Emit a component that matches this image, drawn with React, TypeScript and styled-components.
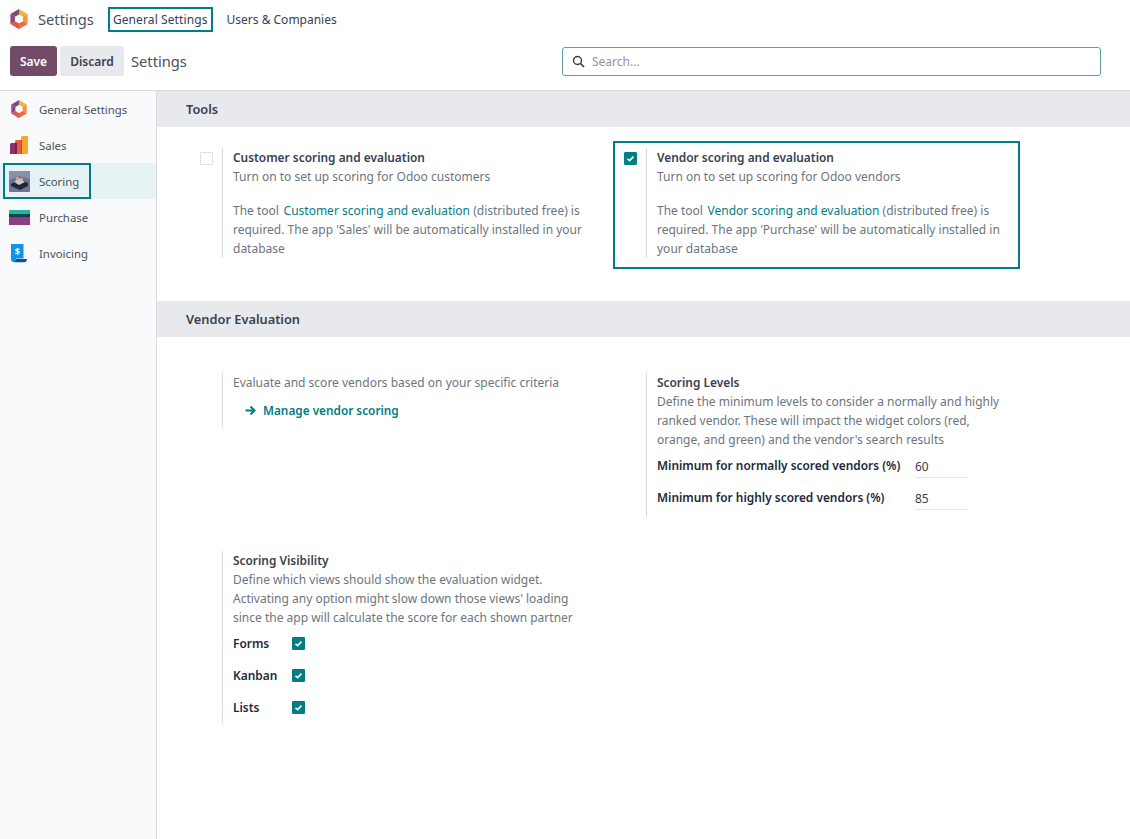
import styled, { createGlobalStyle } from 'styled-components';

const GlobalStyle = createGlobalStyle`
  html, body {
    margin: 0;
    padding: 0;
    background: #fff;
    font-family: "Noto Sans", "Open Sans", sans-serif;
    font-size: 12px;
    color: #6c757d;
  }
`;

const TEAL = '#017e84';

function OdooLogo({ size = 20 }: { size?: number }) {
  return (
    <svg width={size} height={size} viewBox="0 0 20 20">
      <path d="M10 0 L18.6 5 L14 7.7 L10 5.4 Z" fill="#f7b13c" />
      <path d="M18.6 5 V15 L14 12.3 V7.7 Z" fill="#f5963a" />
      <path d="M18.6 15 L10 20 L5.6 17.5 L10 14.6 L14 12.3 Z" fill="#ef6a3c" />
      <path d="M10 20 L1.4 15 L6 12.3 L10 14.6 Z" fill="#e4573f" />
      <path d="M1.4 15 V5 L6 7.7 V12.3 Z" fill="#8f4a7c" />
      <path d="M1.4 5 L10 0 V5.4 L6 7.7 Z" fill="#7c4a80" />
    </svg>
  );
}

function SalesIcon() {
  return (
    <svg width="20" height="20" viewBox="0 0 20 20">
      <path d="M1 9.5Q1 8 2.5 8H8V19H1Z" fill="#8f2f6b" />
      <path d="M6 6.5Q6 5 7.5 5H13V19H6Z" fill="#e8593f" />
      <path d="M12 2.5Q12 1 13.5 1H19V18Q19 19 18 19H12Z" fill="#f7a72b" />
      <rect x="6" y="8" width="2" height="11" fill="#6e2450" />
      <rect x="12" y="5" width="1" height="14" fill="#c6452f" />
    </svg>
  );
}

function ScoringIcon() {
  return (
    <svg width="21" height="21" viewBox="0 0 21 21">
      <rect width="21" height="21" rx="1" fill="#6f7396" />
      <path d="M0 0H21V8L10 5L0 9Z" fill="#8c8fac" />
      <path d="M2 13L10 8L19 12V15L11 19L2 15Z" fill="#23263a" />
      <path d="M5 11L10 7L16 11L10 14Z" fill="#c9c6cf" />
      <circle cx="8.5" cy="7.5" r="1.8" fill="#e59a72" />
      <circle cx="12.5" cy="8.5" r="1.4" fill="#eab193" />
    </svg>
  );
}

function PurchaseIcon() {
  return (
    <svg width="21" height="15" viewBox="0 0 21 15">
      <rect width="21" height="4" fill="#20b8a0" />
      <rect y="4" width="21" height="3" fill="#14404c" />
      <rect y="7" width="21" height="8" fill="#8a3f7e" />
    </svg>
  );
}

function InvoicingIcon() {
  return (
    <svg width="20" height="20" viewBox="0 0 20 20">
      <path d="M2 1H14.5V15.5H7V19H4.5C3 19 2 18 2 16.5Z" fill="#1193e8" />
      <path d="M4.5 19.2C6.5 19.2 7 17.5 7 16H18C18 18 17 19.2 15 19.2Z" fill="#0b4f9e" />
      <text x="8.3" y="11.5" fontSize="9" fontWeight="700" fill="#fff" textAnchor="middle" fontFamily="Noto Sans, sans-serif">$</text>
    </svg>
  );
}

const Page = styled.div`
  width: 1130px;
  height: 839px;
  display: flex;
  flex-direction: column;
  overflow: hidden;
`;

const NavBar = styled.div`
  height: 38px;
  display: flex;
  align-items: center;
  padding-left: 9px;
`;

const AppName = styled.span`
  margin-left: 9px;
  font-size: 14.7px;
  color: #4a4f59;
`;

const NavItem = styled.span<{ $outlined?: boolean }>`
  font-size: 12px;
  color: #374151;
  box-sizing: border-box;
  height: 25px;
  display: flex;
  align-items: center;
  padding: 0 ${({ $outlined }) => ($outlined ? '3px' : '4px')};
  margin-left: ${({ $outlined }) => ($outlined ? '14px' : '8px')};
  letter-spacing: ${({ $outlined }) => ($outlined ? '0.1px' : '0')};
  border: 2px solid ${({ $outlined }) => ($outlined ? TEAL : 'transparent')};
`;

const ControlBar = styled.div`
  height: 53px;
  display: flex;
  align-items: center;
  padding: 0 29px 6px 10px;
  border-bottom: 1px solid #d8dadd;
  box-sizing: border-box;
`;

const ActionButton = styled.button<{ $primary?: boolean }>`
  height: 30px;
  border: 0;
  border-radius: 3px;
  font: 600 12px "Noto Sans", sans-serif;
  padding: 0;
  margin-right: 3px;
  width: ${({ $primary }) => ($primary ? '47px' : '64px')};
  background: ${({ $primary }) => ($primary ? '#714b67' : '#e7e9ed')};
  color: ${({ $primary }) => ($primary ? '#fff' : '#374151')};
`;

const Breadcrumb = styled.span`
  margin-left: 4px;
  font-size: 14.7px;
  color: #4a4f59;
`;

const SearchBox = styled.div`
  margin-left: auto;
  width: 539px;
  height: 29px;
  box-sizing: border-box;
  border: 1px solid #5f9ea3;
  border-radius: 3px;
  display: flex;
  align-items: center;
  padding-left: 9px;
  gap: 7px;
  color: #8f959e;
`;

const Body = styled.div`
  flex: 1;
  display: flex;
  min-height: 0;
`;

const Sidebar = styled.div`
  width: 156px;
  border-right: 1px solid #d8dadd;
  background: #f9fafb;
`;

const SideItem = styled.div<{ $active?: boolean }>`
  position: relative;
  height: 36px;
  display: flex;
  align-items: center;
  color: #4a4f59;
  font-size: 11.4px;
  background: ${({ $active }) => ($active ? '#e6f2f3' : 'transparent')};
`;

const SideIcon = styled.span`
  width: 39px;
  display: flex;
  justify-content: center;
  padding-right: 1px;
  box-sizing: border-box;
`;

const FocusBox = styled.div`
  position: absolute;
  left: 3px;
  top: 0;
  width: 88px;
  height: 36px;
  box-sizing: border-box;
  border: 2px solid ${TEAL};
`;

const Content = styled.div`
  flex: 1;
  min-width: 0;
`;

const SectionTitle = styled.div`
  height: 36px;
  background: #e7e9ed;
  display: flex;
  align-items: center;
  padding-left: 29px;
  font-size: 12.8px;
  font-weight: 600;
  color: #374151;
`;

const SettingsGrid = styled.div<{ $padTop: number; $padBottom: number; $rowGap?: number }>`
  display: grid;
  grid-template-columns: 424px 424px;
  row-gap: ${({ $rowGap }) => $rowGap ?? 0}px;
  padding: ${({ $padTop }) => $padTop}px 0 ${({ $padBottom }) => $padBottom}px 34px;
  align-items: start;
`;

const Setting = styled.div`
  display: flex;
  position: relative;
`;

const Outline = styled.div`
  position: absolute;
  left: -2px;
  top: -7px;
  width: 407px;
  height: 128px;
  box-sizing: border-box;
  border: 2px solid ${TEAL};
`;

const CheckCol = styled.div`
  width: 31px;
  padding: 4px 0 0 9px;
  box-sizing: border-box;
`;

const Panel = styled.div<{ $padBottom?: number }>`
  border-left: 1px solid #d8dadd;
  padding: 0 0 ${({ $padBottom }) => $padBottom ?? 0}px 10px;
  width: 364px;
  box-sizing: border-box;
  line-height: 19px;
  font-size: 12px;
`;

const Heading = styled.div`
  color: #374151;
  font-size: 11.9px;
  font-weight: 600;
`;

const Paragraph = styled.div<{ $gap?: number }>`
  margin-top: ${({ $gap }) => $gap ?? 0}px;
`;

const TealLink = styled.span`
  margin-left: 1.5px;
  color: ${TEAL};
`;

const ManageLink = styled.div`
  display: flex;
  align-items: center;
  gap: 7px;
  margin: 9px 0 7px 12px;
  color: ${TEAL};
  font-size: 11.8px;
  font-weight: 600;
`;

const FieldRow = styled.div<{ $labelWidth: number }>`
  display: grid;
  grid-template-columns: ${({ $labelWidth }) => $labelWidth}px 53px;
  align-items: center;
  height: 32.5px;
  color: #1f2937;
  font-size: 11.9px;
  font-weight: 600;
`;

const NumberValue = styled.div`
  height: 25px;
  line-height: 27px;
  font-size: 12px;
  font-weight: 400;
  color: #374151;
  border-bottom: 1px solid #e2e4e8;
  box-sizing: border-box;
`;

const CheckRow = styled.div`
  display: grid;
  grid-template-columns: 59px 13px;
  align-items: center;
  height: 32px;
  color: #1f2937;
  font-size: 11.9px;
  font-weight: 600;
`;

const CheckBoxShape = styled.span<{ $checked?: boolean }>`
  display: flex;
  align-items: center;
  justify-content: center;
  width: 13px;
  height: 13px;
  box-sizing: border-box;
  border-radius: 1px;
  background: ${({ $checked }) => ($checked ? TEAL : '#fff')};
  border: 1px solid ${({ $checked }) => ($checked ? TEAL : '#dfe1e5')};
`;

function CheckBox({ checked }: { checked?: boolean }) {
  return (
    <CheckBoxShape $checked={checked}>
      {checked && (
        <svg width="9" height="9" viewBox="0 0 9 9">
          <path d="M1.5 4.8L3.6 6.6L7.5 2.6" fill="none" stroke="#fff" strokeWidth="1.7" />
        </svg>
      )}
    </CheckBoxShape>
  );
}

const sideItems = [
  { label: 'General Settings', icon: <OdooLogo size={18} /> },
  { label: 'Sales', icon: <SalesIcon /> },
  { label: 'Scoring', icon: <ScoringIcon />, active: true },
  { label: 'Purchase', icon: <PurchaseIcon /> },
  { label: 'Invoicing', icon: <InvoicingIcon /> },
];

function App() {
  return (
    <Page>
      <GlobalStyle />
      <NavBar>
        <OdooLogo />
        <AppName>Settings</AppName>
        <NavItem $outlined>General Settings</NavItem>
        <NavItem>Users &amp; Companies</NavItem>
      </NavBar>
      <ControlBar>
        <ActionButton $primary>Save</ActionButton>
        <ActionButton>Discard</ActionButton>
        <Breadcrumb>Settings</Breadcrumb>
        <SearchBox>
          <svg width="13" height="13" viewBox="0 0 13 13">
            <circle cx="5.5" cy="5.5" r="4" fill="none" stroke="#374151" strokeWidth="1.5" />
            <path d="M8.5 8.5L12 12" stroke="#374151" strokeWidth="1.7" />
          </svg>
          Search...
        </SearchBox>
      </ControlBar>
      <Body>
        <Sidebar>
          {sideItems.map((item) => (
            <SideItem key={item.label} $active={item.active}>
              <SideIcon>{item.icon}</SideIcon>
              {item.label}
              {item.active && <FocusBox />}
            </SideItem>
          ))}
        </Sidebar>
        <Content>
          <SectionTitle>Tools</SectionTitle>
          <SettingsGrid $padTop={21} $padBottom={43}>
            <Setting>
              <CheckCol>
                <CheckBox />
              </CheckCol>
              <Panel>
                <Heading>Customer scoring and evaluation</Heading>
                <Paragraph>Turn on to set up scoring for Odoo customers</Paragraph>
                <Paragraph $gap={15}>
                  The tool <TealLink>Customer scoring and evaluation</TealLink> (distributed free) is
                  required. The app 'Sales' will be automatically installed in your database
                </Paragraph>
              </Panel>
            </Setting>
            <Setting>
              <Outline />
              <CheckCol>
                <CheckBox checked />
              </CheckCol>
              <Panel>
                <Heading>Vendor scoring and evaluation</Heading>
                <Paragraph>Turn on to set up scoring for Odoo vendors</Paragraph>
                <Paragraph $gap={15}>
                  The tool <TealLink>Vendor scoring and evaluation</TealLink> (distributed free) is
                  required. The app 'Purchase' will be automatically installed in your database
                </Paragraph>
              </Panel>
            </Setting>
          </SettingsGrid>
          <SectionTitle>Vendor Evaluation</SectionTitle>
          <SettingsGrid $padTop={36} $padBottom={0} $rowGap={34}>
            <Setting>
              <CheckCol />
              <Panel>
                <Paragraph>Evaluate and score vendors based on your specific criteria</Paragraph>
                <ManageLink>
                  <svg width="11" height="11" viewBox="0 0 11 11">
                    <path d="M0.5 5.5H9M5.5 1.5L9.5 5.5L5.5 9.5" fill="none" stroke={TEAL} strokeWidth="2" />
                  </svg>
                  Manage vendor scoring
                </ManageLink>
              </Panel>
            </Setting>
            <Setting>
              <CheckCol />
              <Panel $padBottom={3}>
                <Heading>Scoring Levels</Heading>
                <Paragraph>
                  Define the minimum levels to consider a normally and highly ranked vendor. These
                  will impact the widget colors (red, orange, and green) and the vendor's search
                  results
                </Paragraph>
                <FieldRow $labelWidth={258}>
                  Minimum for normally scored vendors (%)
                  <NumberValue>60</NumberValue>
                </FieldRow>
                <FieldRow $labelWidth={258}>
                  Minimum for highly scored vendors (%)
                  <NumberValue>85</NumberValue>
                </FieldRow>
              </Panel>
            </Setting>
            <Setting>
              <CheckCol />
              <Panel>
                <Heading>Scoring Visibility</Heading>
                <Paragraph>
                  Define which views should show the evaluation widget. Activating any option might
                  slow down those views' loading since the app will calculate the score for each
                  shown partner
                </Paragraph>
                <CheckRow>
                  Forms
                  <CheckBox checked />
                </CheckRow>
                <CheckRow>
                  Kanban
                  <CheckBox checked />
                </CheckRow>
                <CheckRow>
                  Lists
                  <CheckBox checked />
                </CheckRow>
              </Panel>
            </Setting>
          </SettingsGrid>
        </Content>
      </Body>
    </Page>
  );
}

export default App;
